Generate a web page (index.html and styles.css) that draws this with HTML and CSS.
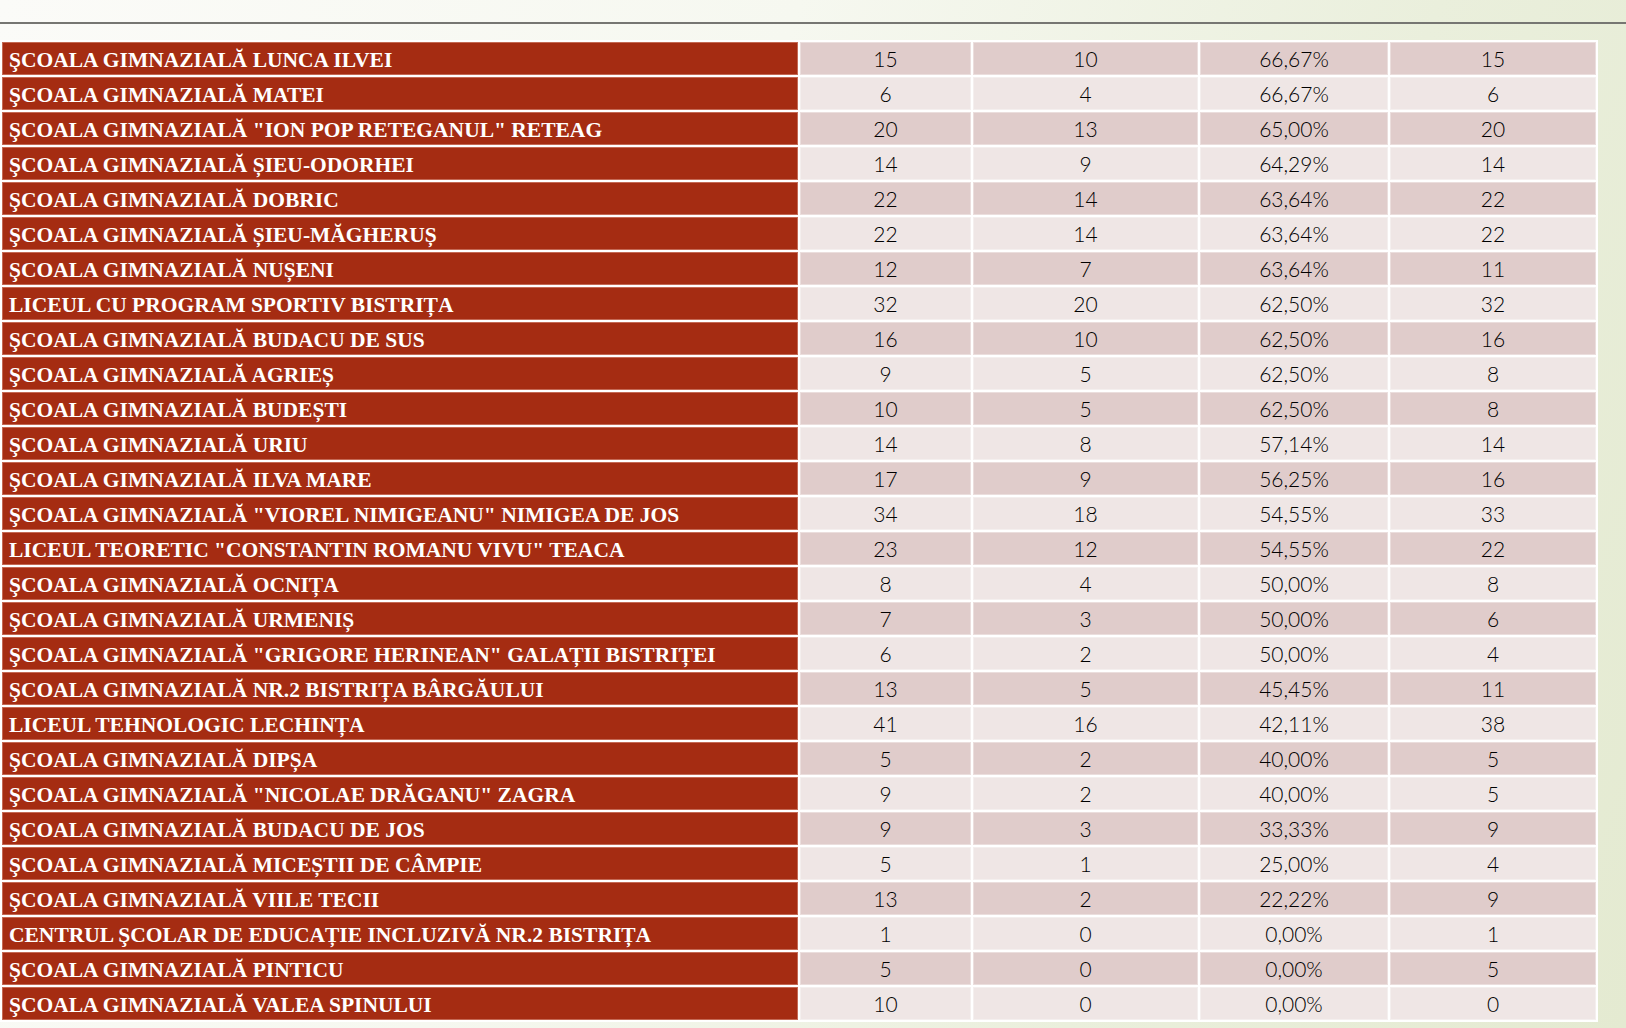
FILE: index.html
```html
<!DOCTYPE html>
<html lang="ro">
<head>
<meta charset="utf-8">
<title>Rezultate</title>
<link rel="stylesheet" href="styles.css">
</head>
<body>
<div class="slide">
  <div class="rule"></div>
  <table class="results">
    <colgroup>
      <col class="c-name"><col class="c-a"><col class="c-b"><col class="c-c"><col class="c-d">
    </colgroup>
    <tbody>
      <tr><td class="name">ŞCOALA GIMNAZIALĂ LUNCA ILVEI</td><td>15</td><td>10</td><td>66,67%</td><td>15</td></tr>
      <tr><td class="name">ŞCOALA GIMNAZIALĂ MATEI</td><td>6</td><td>4</td><td>66,67%</td><td>6</td></tr>
      <tr><td class="name">ŞCOALA GIMNAZIALĂ "ION POP RETEGANUL" RETEAG</td><td>20</td><td>13</td><td>65,00%</td><td>20</td></tr>
      <tr><td class="name">ŞCOALA GIMNAZIALĂ ȘIEU-ODORHEI</td><td>14</td><td>9</td><td>64,29%</td><td>14</td></tr>
      <tr><td class="name">ŞCOALA GIMNAZIALĂ DOBRIC</td><td>22</td><td>14</td><td>63,64%</td><td>22</td></tr>
      <tr><td class="name">ŞCOALA GIMNAZIALĂ ȘIEU-MĂGHERUȘ</td><td>22</td><td>14</td><td>63,64%</td><td>22</td></tr>
      <tr><td class="name">ŞCOALA GIMNAZIALĂ NUȘENI</td><td>12</td><td>7</td><td>63,64%</td><td>11</td></tr>
      <tr><td class="name">LICEUL CU PROGRAM SPORTIV BISTRIȚA</td><td>32</td><td>20</td><td>62,50%</td><td>32</td></tr>
      <tr><td class="name">ŞCOALA GIMNAZIALĂ BUDACU DE SUS</td><td>16</td><td>10</td><td>62,50%</td><td>16</td></tr>
      <tr><td class="name">ŞCOALA GIMNAZIALĂ AGRIEȘ</td><td>9</td><td>5</td><td>62,50%</td><td>8</td></tr>
      <tr><td class="name">ŞCOALA GIMNAZIALĂ BUDEȘTI</td><td>10</td><td>5</td><td>62,50%</td><td>8</td></tr>
      <tr><td class="name">ŞCOALA GIMNAZIALĂ URIU</td><td>14</td><td>8</td><td>57,14%</td><td>14</td></tr>
      <tr><td class="name">ŞCOALA GIMNAZIALĂ ILVA MARE</td><td>17</td><td>9</td><td>56,25%</td><td>16</td></tr>
      <tr><td class="name">ŞCOALA GIMNAZIALĂ "VIOREL NIMIGEANU" NIMIGEA DE JOS</td><td>34</td><td>18</td><td>54,55%</td><td>33</td></tr>
      <tr><td class="name">LICEUL TEORETIC "CONSTANTIN ROMANU VIVU" TEACA</td><td>23</td><td>12</td><td>54,55%</td><td>22</td></tr>
      <tr><td class="name">ŞCOALA GIMNAZIALĂ OCNIȚA</td><td>8</td><td>4</td><td>50,00%</td><td>8</td></tr>
      <tr><td class="name">ŞCOALA GIMNAZIALĂ URMENIȘ</td><td>7</td><td>3</td><td>50,00%</td><td>6</td></tr>
      <tr><td class="name">ŞCOALA GIMNAZIALĂ "GRIGORE HERINEAN" GALAȚII BISTRIȚEI</td><td>6</td><td>2</td><td>50,00%</td><td>4</td></tr>
      <tr><td class="name">ŞCOALA GIMNAZIALĂ NR.2 BISTRIȚA BÂRGĂULUI</td><td>13</td><td>5</td><td>45,45%</td><td>11</td></tr>
      <tr><td class="name">LICEUL TEHNOLOGIC LECHINȚA</td><td>41</td><td>16</td><td>42,11%</td><td>38</td></tr>
      <tr><td class="name">ŞCOALA GIMNAZIALĂ DIPȘA</td><td>5</td><td>2</td><td>40,00%</td><td>5</td></tr>
      <tr><td class="name">ŞCOALA GIMNAZIALĂ "NICOLAE DRĂGANU" ZAGRA</td><td>9</td><td>2</td><td>40,00%</td><td>5</td></tr>
      <tr><td class="name">ŞCOALA GIMNAZIALĂ BUDACU DE JOS</td><td>9</td><td>3</td><td>33,33%</td><td>9</td></tr>
      <tr><td class="name">ŞCOALA GIMNAZIALĂ MICEȘTII DE CÂMPIE</td><td>5</td><td>1</td><td>25,00%</td><td>4</td></tr>
      <tr><td class="name">ŞCOALA GIMNAZIALĂ VIILE TECII</td><td>13</td><td>2</td><td>22,22%</td><td>9</td></tr>
      <tr><td class="name">CENTRUL ŞCOLAR DE EDUCAȚIE INCLUZIVĂ NR.2 BISTRIȚA</td><td>1</td><td>0</td><td>0,00%</td><td>1</td></tr>
      <tr><td class="name">ŞCOALA GIMNAZIALĂ PINTICU</td><td>5</td><td>0</td><td>0,00%</td><td>5</td></tr>
      <tr><td class="name">ŞCOALA GIMNAZIALĂ VALEA SPINULUI</td><td>10</td><td>0</td><td>0,00%</td><td>0</td></tr>
    </tbody>
  </table>
</div>
</body>
</html>
```

FILE: styles.css
```css
html, body {
  margin: 0;
  padding: 0;
}
body {
  width: 1626px;
  height: 1028px;
  overflow: hidden;
  background: linear-gradient(110deg, #fbfbf8 0%, #f6f8f0 40%, #eaefdc 72%, #e4ead1 100%);
}
.slide {
  padding-top: 22px;
}
.rule {
  height: 2px;
  background: #767672;
  margin-bottom: 16px;
}
.results {
  border-collapse: separate;
  border-spacing: 2px;
  background: #ffffff;
  table-layout: fixed;
  width: 1598px;
}
.c-name { width: 796px; }
.c-a { width: 171px; }
.c-b { width: 225px; }
.c-c { width: 188px; }
.c-d { width: 206px; }
.results td {
  height: 33px;
  padding: 0;
  box-sizing: border-box;
  text-align: center;
  vertical-align: middle;
  font-family: "Lato", "DejaVu Sans", sans-serif;
  font-weight: 300;
  font-size: 21px;
  color: #000000;
  background: #e0cccb;
  box-shadow: inset 0 0 0 1px rgba(255,255,255,0.35);
  white-space: nowrap;
  line-height: 1;
}
.results tr:nth-child(even) td {
  background: #efe6e5;
}
.results td.name,
.results tr:nth-child(even) td.name {
  background: #a52c12;
  color: #ffffff;
  text-align: left;
  padding-left: 7px;
  padding-top: 4px;
  font-family: "Liberation Serif", "Times New Roman", serif;
  font-weight: 700;
  font-size: 21.5px;
  box-shadow: inset 0 0 0 1px rgba(255,220,210,0.35);
}
```
